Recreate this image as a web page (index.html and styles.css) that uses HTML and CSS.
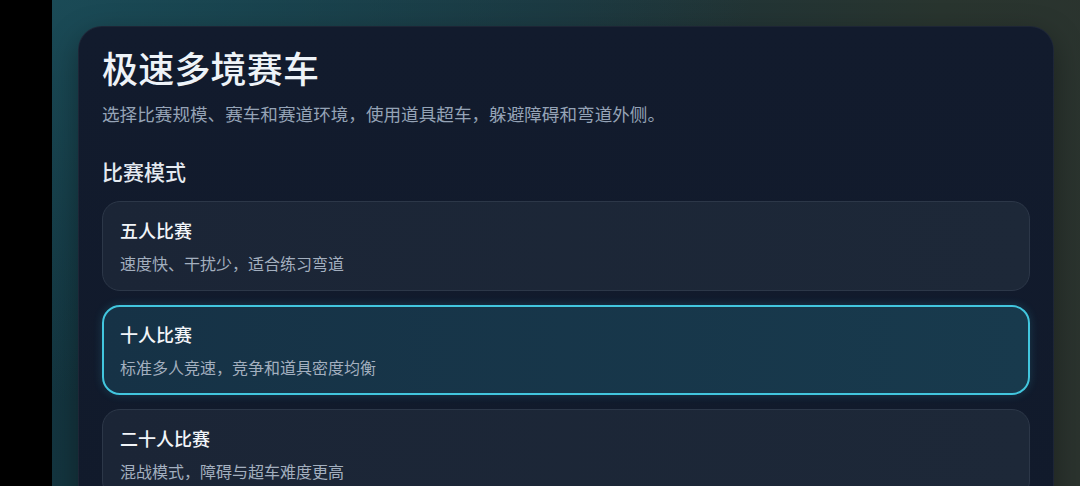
FILE: index.html
```html
<!DOCTYPE html>
<html lang="zh-CN">
<head>
<meta charset="utf-8">
<title>极速多境赛车</title>
<link rel="stylesheet" href="styles.css">
</head>
<body>
<div class="frame">
  <div class="bezel"></div>
  <main class="stage">
    <section class="panel">
      <h1 class="title">极速多境赛车</h1>
      <p class="subtitle">选择比赛规模、赛车和赛道环境，使用道具超车，躲避障碍和弯道外侧。</p>
      <h2 class="section-label">比赛模式</h2>
      <div class="options">
        <div class="option">
          <div class="option-title">五人比赛</div>
          <div class="option-desc">速度快、干扰少，适合练习弯道</div>
        </div>
        <div class="option selected">
          <div class="option-title">十人比赛</div>
          <div class="option-desc">标准多人竞速，竞争和道具密度均衡</div>
        </div>
        <div class="option">
          <div class="option-title">二十人比赛</div>
          <div class="option-desc">混战模式，障碍与超车难度更高</div>
        </div>
      </div>
    </section>
  </main>
</div>
</body>
</html>
```

FILE: styles.css
```css
* { box-sizing: border-box; }
html, body {
  margin: 0;
  padding: 0;
  width: 1080px;
  height: 486px;
  overflow: hidden;
  background: #000;
  font-family: "Noto Sans CJK SC", "Noto Sans", sans-serif;
}
.frame {
  display: flex;
  width: 1080px;
  height: 486px;
}
.bezel {
  width: 52px;
  flex: none;
  background: #000;
}
.stage {
  flex: 1;
  padding: 26px 26px 0 26px;
  background:
    radial-gradient(ellipse 700px 400px at 0% 0%, rgba(28, 78, 90, 0.85) 0%, rgba(28, 78, 90, 0) 100%),
    linear-gradient(100deg, #123540 0%, #1c343b 45%, #29352f 80%, #2b332e 100%);
  overflow: hidden;
}
.panel {
  height: 520px;
  border-radius: 24px;
  background: linear-gradient(180deg, #121b2d 0%, #111a2b 100%);
  border: 1px solid rgba(255, 255, 255, 0.05);
  padding: 18px 23px 0 23px;
  box-shadow: 0 10px 30px rgba(0, 0, 0, 0.35);
}
.title {
  margin: 0;
  font-size: 36px;
  line-height: 44px;
  font-weight: 500;
  color: #eef3f8;
  letter-spacing: 0.2px;
}
.subtitle {
  margin: 12px 0 0 0;
  font-size: 17.6px;
  line-height: 26px;
  color: #95a3b6;
}
.section-label {
  margin: 30px 0 0 0;
  font-size: 21px;
  line-height: 28px;
  font-weight: 500;
  color: #e4eaf1;
}
.options {
  margin-top: 16px;
  display: flex;
  flex-direction: column;
  gap: 14px;
}
.option {
  height: 90px;
  border-radius: 18px;
  background: linear-gradient(90deg, #1b2536 0%, #1d2838 100%);
  border: 1px solid #2c3748;
  padding: 15px 17px;
}
.option.selected {
  background: linear-gradient(90deg, #163246 0%, #183a4d 100%);
  border: 2px solid #42c6de;
  padding: 14px 16px;
  box-shadow: 0 0 10px rgba(56, 190, 220, 0.2);
}
.option-title {
  font-size: 18px;
  line-height: 26px;
  font-weight: 500;
  color: #f2f5f9;
}
.option-desc {
  margin-top: 8px;
  font-size: 16px;
  line-height: 24px;
  color: #a3afbf;
}
```
